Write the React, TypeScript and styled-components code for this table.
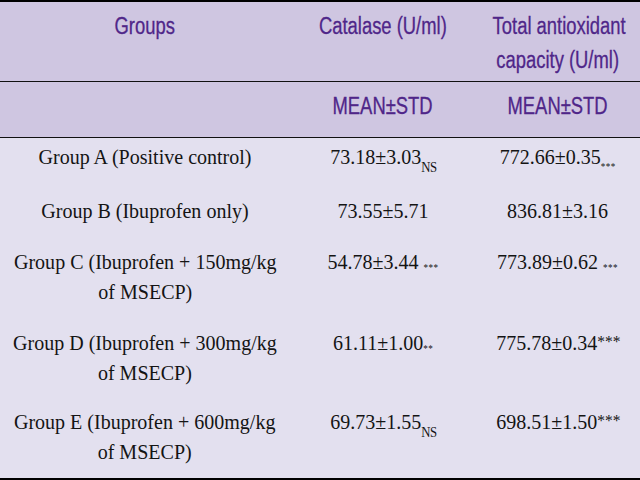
import React from 'react';
import styled, { createGlobalStyle } from 'styled-components';

const GlobalStyle = createGlobalStyle`
  html, body {
    margin: 0;
    padding: 0;
    background: #e3e0ef;
  }
  #root {
    width: 640px;
    height: 480px;
    overflow: hidden;
  }
`;

const Table = styled.div`
  width: 640px;
  border-top: 2px solid #000;
  border-bottom: 2px solid #000;
  background: #e3e0ef;
`;

const HeadRow = styled.div<{ $padTop: number; $padBottom: number }>`
  display: grid;
  grid-template-columns: 290px 186px 164px;
  background: #cfc6e1;
  border-bottom: 1px solid #111;
  padding: ${({ $padTop }) => $padTop}px 0 ${({ $padBottom }) => $padBottom}px;
`;

const HeadCell = styled.div`
  text-align: center;
  font-family: 'Liberation Sans', Arial, sans-serif;
  font-size: 23px;
  line-height: 34px;
  color: #4f2689;
  -webkit-text-stroke: 0.3px #4f2689;
`;

const HeadText = styled.span`
  display: inline-block;
  transform: scaleX(0.8);
  transform-origin: center;
  white-space: nowrap;
`;

const BodyRow = styled.div<{ $padTop: number; $padBottom: number }>`
  display: grid;
  grid-template-columns: 290px 186px 164px;
  padding: ${({ $padTop }) => $padTop}px 0 ${({ $padBottom }) => $padBottom}px;
`;

const Cell = styled.div`
  text-align: center;
  font-family: 'Liberation Serif', 'Times New Roman', serif;
  font-size: 22px;
  line-height: 30px;
  color: #141414;
  white-space: nowrap;
`;

const CellText = styled.span`
  display: inline-block;
  vertical-align: top;
  transform: scaleX(0.91);
  transform-origin: center;
`;

type MarkKind = 'ns' | 'dots' | 'low' | 'star';

const Mark = styled.span<{ $kind: MarkKind }>`
  line-height: 0;
  ${({ $kind }) =>
    $kind === 'ns'
      ? 'font-size: 14px; vertical-align: -8px; letter-spacing: -0.5px;'
      : $kind === 'dots'
      ? 'font-size: 10px; vertical-align: -6px; letter-spacing: 0.5px;'
      : $kind === 'low'
      ? 'font-size: 10px; vertical-align: -2px; letter-spacing: 0.5px;'
      : 'font-size: 17px; vertical-align: 3px;'}
`;

const rows: {
  group: React.ReactNode;
  cat: string;
  catMark?: { kind: MarkKind; text: string };
  tac: string;
  tacMark?: { kind: MarkKind; text: string };
  padTop: number;
  padBottom: number;
}[] = [
  {
    group: 'Group A (Positive control)',
    cat: '73.18±3.03',
    catMark: { kind: 'ns', text: 'NS' },
    tac: '772.66±0.35',
    tacMark: { kind: 'dots', text: '***' },
    padTop: 4,
    padBottom: 20,
  },
  {
    group: 'Group B (Ibuprofen only)',
    cat: '73.55±5.71',
    tac: '836.81±3.16',
    padTop: 4,
    padBottom: 17,
  },
  {
    group: (
      <>
        Group C (Ibuprofen + 150mg/kg
        <br />
        of MSECP)
      </>
    ),
    cat: '54.78±3.44 ',
    catMark: { kind: 'low', text: '***' },
    tac: '773.89±0.62 ',
    tacMark: { kind: 'low', text: '***' },
    padTop: 4,
    padBottom: 17,
  },
  {
    group: (
      <>
        Group D (Ibuprofen + 300mg/kg
        <br />
        of MSECP)
      </>
    ),
    cat: '61.11±1.00',
    catMark: { kind: 'low', text: '**' },
    tac: '775.78±0.34',
    tacMark: { kind: 'star', text: '***' },
    padTop: 4,
    padBottom: 15,
  },
  {
    group: (
      <>
        Group E (Ibuprofen + 600mg/kg
        <br />
        of MSECP)
      </>
    ),
    cat: '69.73±1.55',
    catMark: { kind: 'ns', text: 'NS' },
    tac: '698.51±1.50',
    tacMark: { kind: 'star', text: '***' },
    padTop: 4,
    padBottom: 11,
  },
];

const App: React.FC = () => {
  return (
    <>
      <GlobalStyle />
      <Table>
        <HeadRow $padTop={7} $padBottom={4}>
          <HeadCell>
            <HeadText>Groups</HeadText>
          </HeadCell>
          <HeadCell>
            <HeadText>Catalase (U/ml)</HeadText>
          </HeadCell>
          <HeadCell>
            <HeadText>Total antioxidant</HeadText>
            <br />
            <HeadText>capacity (U/ml)</HeadText>
          </HeadCell>
        </HeadRow>
        <HeadRow $padTop={7} $padBottom={14}>
          <HeadCell />
          <HeadCell>
            <HeadText>MEAN±STD</HeadText>
          </HeadCell>
          <HeadCell>
            <HeadText>MEAN±STD</HeadText>
          </HeadCell>
        </HeadRow>
        {rows.map((r, i) => (
          <BodyRow key={i} $padTop={r.padTop} $padBottom={r.padBottom}>
            <Cell>
              <CellText>{r.group}</CellText>
            </Cell>
            <Cell>
              <CellText>
                {r.cat}
                {r.catMark && <Mark $kind={r.catMark.kind}>{r.catMark.text}</Mark>}
              </CellText>
            </Cell>
            <Cell>
              <CellText>
                {r.tac}
                {r.tacMark && <Mark $kind={r.tacMark.kind}>{r.tacMark.text}</Mark>}
              </CellText>
            </Cell>
          </BodyRow>
        ))}
      </Table>
    </>
  );
};

export default App;
